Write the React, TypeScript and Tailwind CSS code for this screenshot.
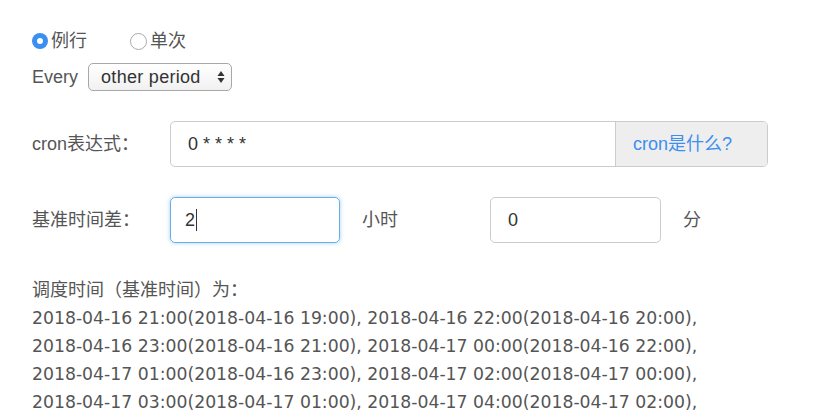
const SCHEDULE = [
  '2018-04-16 21:00(2018-04-16 19:00), 2018-04-16 22:00(2018-04-16 20:00),',
  '2018-04-16 23:00(2018-04-16 21:00), 2018-04-17 00:00(2018-04-16 22:00),',
  '2018-04-17 01:00(2018-04-16 23:00), 2018-04-17 02:00(2018-04-17 00:00),',
  '2018-04-17 03:00(2018-04-17 01:00), 2018-04-17 04:00(2018-04-17 02:00),',
];

const SANS = "font-['Liberation_Sans','Noto_Sans_CJK_SC',sans-serif]";

function App() {
  return (
    <div className={`min-h-screen bg-white pl-8 pt-[30px] text-[18px] text-[#555] ${SANS}`}>
      {/* 类型 */}
      <div className="flex h-[22px] items-center">
        <label className="flex items-center">
          <span className="flex h-4 w-4 items-center justify-center rounded-full bg-[#3b8ff0]">
            <span className="h-[6px] w-[6px] rounded-full bg-white" />
          </span>
          <span className="ml-[3px]">例行</span>
        </label>
        <label className="ml-[43px] flex items-center">
          <span className="h-[17px] w-[17px] rounded-full border border-[#aaa] bg-white" />
          <span className="ml-[3px]">单次</span>
        </label>
      </div>

      <div className="mt-[11px] flex items-center">
        <span>Every</span>
        <div className="ml-[10px] flex h-[28px] w-[144px] items-center justify-between rounded-[5px] border border-[#a8a8a8] bg-gradient-to-b from-white to-[#f1f1f1] pl-[12px] pr-[6px] text-[#333]">
          <span className="tracking-[0.3px]">other period</span>
          <svg width="8" height="14" viewBox="0 0 8 14">
            <path d="M4 1 L7.5 6 H0.5 Z" fill="#333" />
            <path d="M4 13 L7.5 8 H0.5 Z" fill="#333" />
          </svg>
        </div>
      </div>

      {/* cron */}
      <div className="mt-[30px] flex items-center">
        <span className="w-[138px]">cron表达式：</span>
        <div className="flex h-[46px] w-[598px] rounded-[5px] border border-[#ccc]">
          <div className="flex flex-1 items-center pl-[17px] text-[#333]">0 * * * *</div>
          <div className="flex w-[152px] items-center rounded-r-[4px] border-l border-[#ccc] bg-[#eee] pl-[17px] text-[#3b8ff0]">
            cron是什么?
          </div>
        </div>
      </div>

      {/* 时间差 */}
      <div className="mt-[30px] flex items-center">
        <span className="w-[138px]">基准时间差：</span>
        <div className="flex h-[46px] w-[170px] items-center rounded-[5px] border border-[#66afe9] pl-[14px] text-[#333] shadow-[0_0_4px_rgba(102,175,233,0.6)]">
          2<span className="ml-[1px] h-[22px] w-px bg-[#333]" />
        </div>
        <span className="ml-[22px] w-[128px]">小时</span>
        <div className="flex h-[46px] w-[171px] items-center rounded-[5px] border border-[#ccc] pl-[17px] text-[#333]">
          0
        </div>
        <span className="ml-[22px]">分</span>
      </div>

      {/* 调度时间 */}
      <div className="mt-[33px] font-['DejaVu_Sans','Noto_Sans_CJK_SC',sans-serif] text-[17.25px] leading-[28px] text-[#555]">
        <div className={`${SANS} text-[18px]`}>调度时间（基准时间）为：</div>
        {SCHEDULE.map((line) => (
          <div key={line} className="whitespace-nowrap">
            {line}
          </div>
        ))}
      </div>
    </div>
  );
}

export default App;
